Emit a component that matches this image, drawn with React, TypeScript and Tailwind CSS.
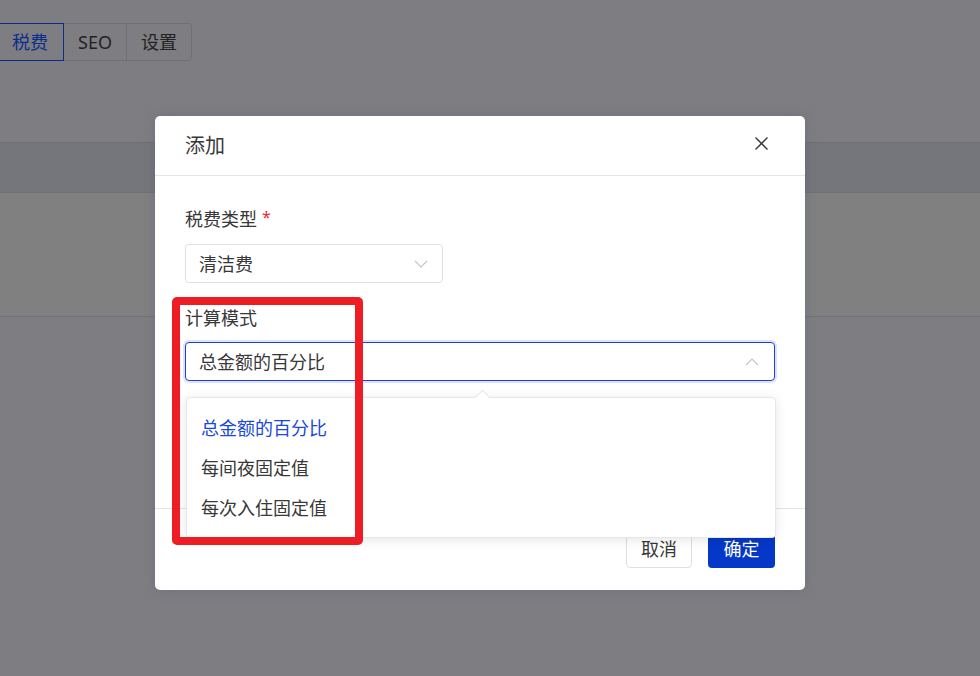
import React from "react";

function ChevronDown() {
  return (
    <svg width="14" height="8" viewBox="0 0 14 8" fill="none">
      <polyline points="1,1 7,7 13,1" stroke="#c0c4cc" strokeWidth="1.1" />
    </svg>
  );
}
function ChevronUp() {
  return (
    <svg width="14" height="8" viewBox="0 0 14 8" fill="none">
      <polyline points="1,7 7,1 13,7" stroke="#c0c4cc" strokeWidth="1.1" />
    </svg>
  );
}

export default function App() {
  return (
    <div className="relative w-[980px] h-[676px] overflow-hidden bg-[#7e7e82] font-['Noto_Sans','Noto_Sans_CJK_SC',sans-serif] text-[#333]">
      {/* background page (dimmed) */}
      <div className="flex flex-col">
        <div className="pt-[23px] flex">
          <div className="flex -ml-[4px] h-[38px] rounded-r-[4px] border-y border-r border-[#717175] text-[18px] leading-[36px] text-[#222224]">
            <div className="px-[15px] border border-[#0b2d8a] -my-px text-[#0b2d8a] leading-[36px] h-[38px]">税费</div>
            <div className="px-[14px] border-r border-[#717175]">SEO</div>
            <div className="px-[14px]">设置</div>
          </div>
        </div>
        <div className="mt-[81px] h-[51px] bg-[#75767b] border-y border-[#6f7075]" />
        <div className="h-[123px] bg-[#808080]" />
        <div className="h-px bg-[#727276]" />
        <div className="flex-1 bg-[#78787c] h-[360px]" />
      </div>

      {/* modal */}
      <div className="absolute left-[155px] top-[116px] w-[650px] h-[474px] bg-white rounded-[5px] shadow-[0_0_12px_rgba(60,70,110,0.25)] flex flex-col">
        <div className="h-[60px] border-b border-[#e4e4e7] flex items-center justify-between pl-[30px] pr-[37px]">
          <span className="text-[20px] leading-[28px] text-[#383838] pt-[1px]">添加</span>
          <svg width="13" height="13" viewBox="0 0 13 13" className="-mt-[4px]">
            <line x1="0.5" y1="0.5" x2="12.5" y2="12.5" stroke="#333" strokeWidth="1.3" />
            <line x1="12.5" y1="0.5" x2="0.5" y2="12.5" stroke="#333" strokeWidth="1.3" />
          </svg>
        </div>

        <div className="relative h-[332px] px-[30px] pt-[30px] flex flex-col">
          <div className="text-[18px] leading-[26px] text-[#383838] flex items-start">
            税费类型<span className="text-[#f0283c] ml-[5px] text-[16px] leading-[22px]">*</span>
          </div>
          <div className="mt-[12px] w-[258px] h-[39px] border border-[#dcdfe6] rounded-[4px] pl-[13px] pr-[14px] flex items-center justify-between">
            <span className="text-[18px] leading-[24px] text-[#383838]">清洁费</span>
            <ChevronDown />
          </div>
          <div className="mt-[22px] text-[18px] leading-[26px] text-[#383838]">计算模式</div>
          <div className="mt-[11px] w-[590px] h-[39px] border border-[#1d3fd6] rounded-[4px] pl-[13px] pr-[15px] flex items-center justify-between shadow-[0_0_0_2px_rgba(60,100,230,0.18)]">
            <span className="text-[18px] leading-[24px] text-[#383838]">总金额的百分比</span>
            <ChevronUp />
          </div>
        </div>

        <div className="flex-1 border-t border-[#e4e4e7] flex items-start justify-end gap-[16px] pr-[30px] pt-[20px]">
          <button className="w-[66px] h-[39px] border border-[#dcdfe6] rounded-[4px] bg-white text-[18px] leading-[24px] text-[#383838]">取消</button>
          <button className="w-[67px] h-[39px] rounded-[4px] bg-[#0538c8] text-[18px] leading-[24px] text-white">确定</button>
        </div>

        {/* dropdown popup */}
        <div className="absolute left-[31px] top-[281px] w-[590px] h-[141px] bg-white border border-[#e4e7ed] rounded-[4px] shadow-[0_2px_12px_rgba(0,0,0,0.1)] pt-[10px] z-10">
          <div className="absolute -top-[6px] left-[290px] w-[11px] h-[11px] bg-white border-l border-t border-[#e4e7ed] rotate-45" />
          <div className="relative h-[40px] flex items-center pl-[14px] text-[18px] text-[#1a4ad6]">总金额的百分比</div>
          <div className="relative h-[40px] flex items-center pl-[14px] text-[18px] text-[#383838]">每间夜固定值</div>
          <div className="relative h-[40px] flex items-center pl-[14px] text-[18px] text-[#383838]">每次入住固定值</div>
        </div>
      </div>

      {/* red annotation box */}
      <div className="absolute left-[172px] top-[297px] w-[191px] h-[248px] border-[8px] border-[#ee1c25] rounded-[5px] z-20 pointer-events-none" />
    </div>
  );
}
